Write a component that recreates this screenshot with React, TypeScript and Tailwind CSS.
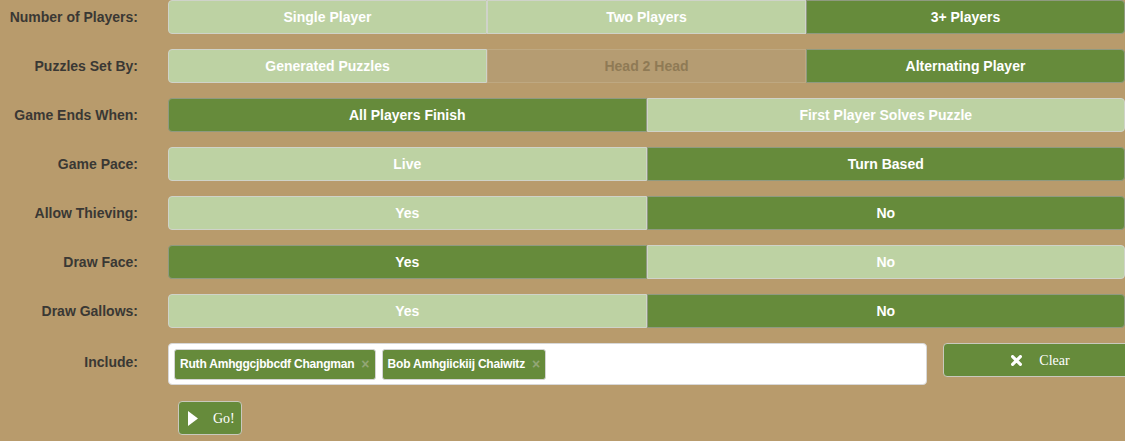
import React from "react";

type Opt = { label: string; state: "on" | "off" | "disabled" };

const rows: { label: string; opts: Opt[] }[] = [
  {
    label: "Number of Players:",
    opts: [
      { label: "Single Player", state: "off" },
      { label: "Two Players", state: "off" },
      { label: "3+ Players", state: "on" },
    ],
  },
  {
    label: "Puzzles Set By:",
    opts: [
      { label: "Generated Puzzles", state: "off" },
      { label: "Head 2 Head", state: "disabled" },
      { label: "Alternating Player", state: "on" },
    ],
  },
  {
    label: "Game Ends When:",
    opts: [
      { label: "All Players Finish", state: "on" },
      { label: "First Player Solves Puzzle", state: "off" },
    ],
  },
  {
    label: "Game Pace:",
    opts: [
      { label: "Live", state: "off" },
      { label: "Turn Based", state: "on" },
    ],
  },
  {
    label: "Allow Thieving:",
    opts: [
      { label: "Yes", state: "off" },
      { label: "No", state: "on" },
    ],
  },
  {
    label: "Draw Face:",
    opts: [
      { label: "Yes", state: "on" },
      { label: "No", state: "off" },
    ],
  },
  {
    label: "Draw Gallows:",
    opts: [
      { label: "Yes", state: "off" },
      { label: "No", state: "on" },
    ],
  },
];

function Seg({ opt, first, last }: { opt: Opt; first: boolean; last: boolean }) {
  const base =
    "flex-1 h-[34px] flex items-center justify-center text-[14px] font-bold border pt-[1px]";
  const round = `${first ? "rounded-l-[4px]" : ""} ${last ? "rounded-r-[4px]" : ""}`;
  const color =
    opt.state === "on"
      ? "bg-[#668b3b] text-white border-[#8f9a80]"
      : opt.state === "off"
      ? "bg-[#bdd2a3] text-white border-[#cfd3c9]"
      : "bg-[#b59c72] text-[#8f7a55] border-[#bea881]";
  return <div className={`${base} ${round} ${color}`}>{opt.label}</div>;
}

function Tag({ name }: { name: string }) {
  return (
    <div className="h-[31px] flex items-center bg-[#668b3b] border border-[#d4d4d4] rounded-[3px] pl-[5px] pr-[5px]">
      <span className="text-white text-[12px] font-bold tracking-[-0.2px]">{name}</span>
      <span className="ml-[7px] text-[#93a676] text-[14px] font-bold leading-none">×</span>
    </div>
  );
}

export default function App() {
  return (
    <div
      className="w-[1125px] h-[441px] bg-[#b89b6c] overflow-hidden"
      style={{ fontFamily: '"Liberation Sans", Arial, sans-serif' }}
    >
      <div className="flex flex-col gap-[15px]">
        {rows.map((r) => (
          <div key={r.label} className="flex items-center">
            <div className="w-[138px] shrink-0 text-right text-[14px] font-bold text-[#3a3834] whitespace-nowrap pt-[1px]">
              {r.label}
            </div>
            <div className="ml-[30px] flex-1 flex">
              {r.opts.map((o, i) => (
                <Seg key={i} opt={o} first={i === 0} last={i === r.opts.length - 1} />
              ))}
            </div>
          </div>
        ))}
        <div className="flex items-start">
          <div className="w-[138px] shrink-0 text-right text-[14px] font-bold text-[#3a3834] pt-[9px]">
            Include:
          </div>
          <div className="ml-[30px] w-[759px] shrink-0 h-[42px] bg-white border border-[#d8d8d8] rounded-[4px] flex items-center gap-[6px] pl-[5px]">
            <Tag name="Ruth Amhggcjbbcdf Changman" />
            <Tag name="Bob Amhgiickiij Chaiwitz" />
          </div>
          <button className="ml-[16px] shrink-0 w-[197px] h-[34px] bg-[#668b3b] border border-[#c9c9bd] rounded-[4px] flex items-center justify-center text-white text-[14px] pr-[2px]">
            <svg width="11" height="11" viewBox="0 0 11 11" className="mr-[17px]">
              <path d="M1.6 1.6 L9.4 9.4 M9.4 1.6 L1.6 9.4" stroke="white" strokeWidth="3.2" strokeLinecap="round" />
            </svg>
            <span style={{ fontFamily: '"Liberation Serif", "Times New Roman", serif' }}>Clear</span>
          </button>
        </div>
      </div>
      <div className="ml-[178px] mt-[16px]">
        <button className="w-[64px] h-[34px] bg-[#668b3b] border border-[#c9c9bd] rounded-[4px] flex items-center pl-[9px] text-white text-[14px]">
          <svg width="10" height="15" viewBox="0 0 10 15">
            <polygon points="0,0 10,7.5 0,15" fill="white" />
          </svg>
          <span className="ml-[15px]" style={{ fontFamily: '"Liberation Serif", "Times New Roman", serif' }}>
            Go!
          </span>
        </button>
      </div>
    </div>
  );
}
